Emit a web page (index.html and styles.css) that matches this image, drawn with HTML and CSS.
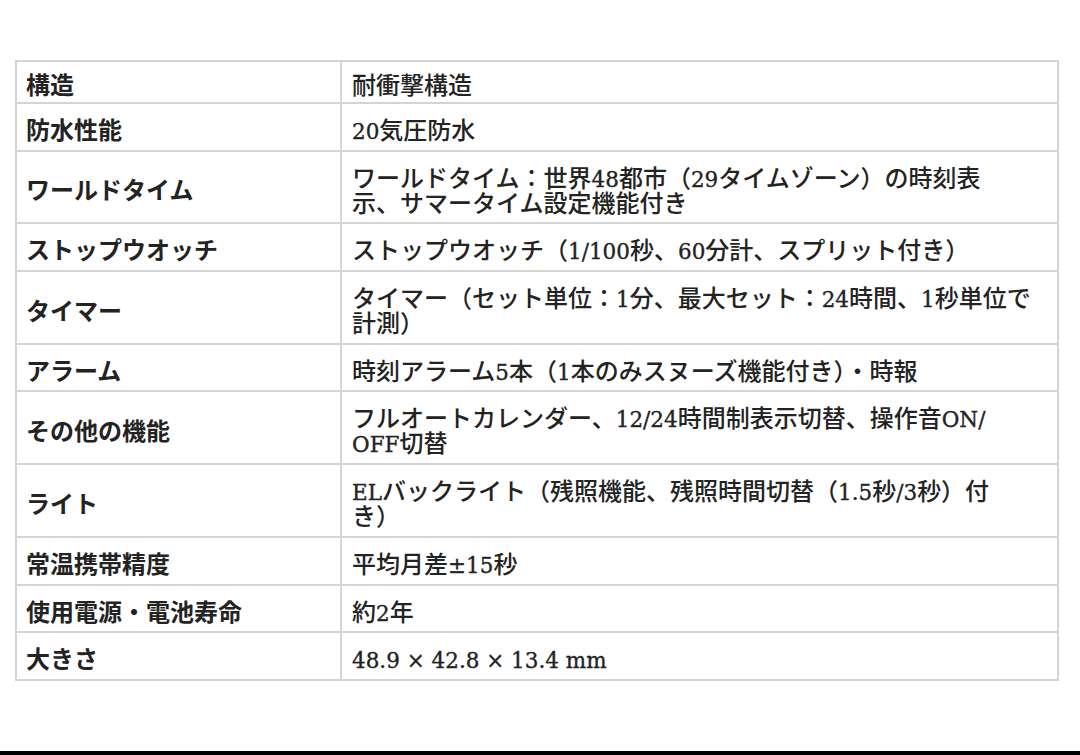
FILE: index.html
```html
<!DOCTYPE html>
<html lang="ja">
<head>
<meta charset="utf-8">
<title>仕様</title>
<link rel="stylesheet" href="styles.css">
</head>
<body>
<div class="page">
  <table class="spec">
    <tbody>
      <tr class="first"><th>構造</th><td>耐衝撃構造</td></tr>
      <tr><th>防水性能</th><td><span class="en">20</span>気圧防水</td></tr>
      <tr><th>ワールドタイム</th><td>ワールドタイム：世界<span class="en">48</span>都市（<span class="en">29</span>タイムゾーン）の時刻表<br>示、サマータイム設定機能付き</td></tr>
      <tr><th>ストップウオッチ</th><td>ストップウオッチ（<span class="en">1/100</span>秒、<span class="en">60</span>分計、スプリット付き）</td></tr>
      <tr><th>タイマー</th><td>タイマー（セット単位：<span class="en">1</span>分、最大セット：<span class="en">24</span>時間、<span class="en">1</span>秒単位で<br>計測）</td></tr>
      <tr><th>アラーム</th><td>時刻アラーム<span class="en">5</span>本（<span class="en">1</span>本のみスヌーズ機能付き）・時報</td></tr>
      <tr><th>その他の機能</th><td>フルオートカレンダー、<span class="en">12/24</span>時間制表示切替、操作音<span class="en">ON/</span><br><span class="en">OFF</span>切替</td></tr>
      <tr><th>ライト</th><td><span class="en">EL</span>バックライト（残照機能、残照時間切替（<span class="en">1.5</span>秒<span class="en">/3</span>秒）付<br>き）</td></tr>
      <tr><th>常温携帯精度</th><td>平均月差<span class="en">±15</span>秒</td></tr>
      <tr><th>使用電源・電池寿命</th><td>約<span class="en">2</span>年</td></tr>
      <tr><th>大きさ</th><td><span class="en">48.9 × 42.8 × 13.4 mm</span></td></tr>
    </tbody>
  </table>
  <div class="bar"></div>
</div>
</body>
</html>
```
FILE: styles.css
```css
html, body {
  margin: 0;
  padding: 0;
  background: #ffffff;
}
.page {
  height: 755px;
  display: flex;
  flex-direction: column;
  padding: 60px 0 0 15px;
  box-sizing: border-box;
  overflow: hidden;
}
.spec {
  border-collapse: collapse;
  width: 1044px;
  table-layout: fixed;
  color: #232323;
}
.spec th,
.spec td {
  border: 2px solid #d4d4d4;
  padding: 12px 10px 8.7px 10px;
  line-height: 25px;
  font-size: 24px;
  vertical-align: middle;
  text-align: left;
  white-space: nowrap;
  font-family: "Noto Sans CJK JP", "Noto Sans", sans-serif;
}
.spec th {
  width: 304px;
  padding-left: 9px;
  font-weight: 700;
}
.spec td {
  font-weight: 500;
}
.spec .en {
  font-family: "DejaVu Serif", "Liberation Serif", serif;
  font-size: 21.5px;
  line-height: 18px;
  font-weight: 400;
  -webkit-text-stroke: 0.35px currentColor;
}
.spec .first th,
.spec .first td {
  padding-top: 9px;
  padding-bottom: 6px;
}
.bar {
  margin-top: auto;
  margin-left: -15px;
  height: 4px;
  background: #000000;
}
```
